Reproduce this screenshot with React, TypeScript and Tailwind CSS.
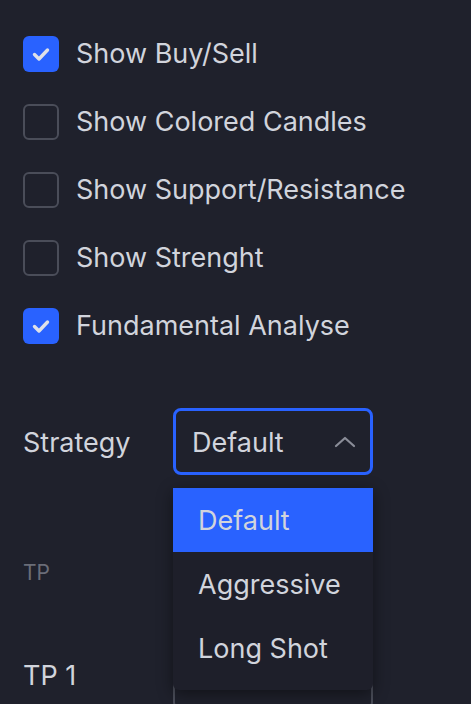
import React, { useState } from 'react';

const options = [
  { label: 'Show Buy/Sell', checked: true },
  { label: 'Show Colored Candles', checked: false },
  { label: 'Show Support/Resistance', checked: false },
  { label: 'Show Strenght', checked: false },
  { label: 'Fundamental Analyse', checked: true },
];

const strategies = ['Default', 'Aggressive', 'Long Shot'];

const Check: React.FC<{ checked: boolean }> = ({ checked }) =>
  checked ? (
    <span className="flex h-[36px] w-[36px] items-center justify-center rounded-[6px] bg-[#2962ff]">
      <svg width="22" height="22" viewBox="0 0 22 22" fill="none">
        <path d="M4.5 11.5l4.5 4.5 8.5-9" stroke="#dfe1e8" strokeWidth="3.4" strokeLinecap="round" strokeLinejoin="round" />
      </svg>
    </span>
  ) : (
    <span className="block h-[36px] w-[36px] rounded-[6px] border-2 border-[#4a4d59]" />
  );

export default function App() {
  const [items, setItems] = useState(options);
  const [strategy, setStrategy] = useState('Default');

  return (
    <div className="h-[704px] overflow-hidden bg-[#1f212c] pl-[23px] pt-[20px] text-[#d1d4dc]" style={{ fontFamily: 'Inter, "Noto Sans", sans-serif' }}>
      {items.map((it, i) => (
        <label key={it.label} className="flex h-[68px] items-center gap-[17px] text-[27px]">
          <button
            className="block"
            onClick={() => setItems(items.map((x, j) => (j === i ? { ...x, checked: !x.checked } : x)))}
          >
            <Check checked={it.checked} />
          </button>
          <span>{it.label}</span>
        </label>
      ))}

      <div className="relative mt-[48px] flex items-center">
        <span className="w-[150px] pt-[3px] text-[27px]">Strategy</span>
        <div className="relative">
          <div className="flex h-[67px] w-[200px] items-center justify-between rounded-[8px] border-[3px] border-[#2962ff] pl-[16px] pr-[14px] text-[27px]">
            <span className="pt-[3px]">{strategy}</span>
            <svg width="22" height="14" viewBox="0 0 22 14" fill="none">
              <path d="M2 11l9-8 9 8" stroke="#8a8d98" strokeWidth="2.2" strokeLinecap="round" strokeLinejoin="round" />
            </svg>
          </div>
          <div className="absolute left-0 top-[80px] z-10 w-[200px] overflow-hidden rounded-b-[6px] bg-[#1e1f2a] pb-[10px] shadow-[0_4px_16px_rgba(0,0,0,0.45)]">
            {strategies.map((s) => (
              <div
                key={s}
                onClick={() => setStrategy(s)}
                className={`flex h-[64px] items-center pl-[25px] pt-[3px] text-[27px] ${s === strategy ? 'bg-[#2962ff]' : ''}`}
              >
                {s}
              </div>
            ))}
          </div>
        </div>
      </div>

      <div className="mt-[84px] text-[21px] leading-[28px] text-[#6a6d78]">TP</div>

      <div className="mt-[56px] flex items-center">
        <span className="w-[150px] text-[27px]">TP 1</span>
        <div className="h-[67px] w-[200px] rounded-[8px] border-2 border-[#4a4d59]" />
      </div>
    </div>
  );
}
